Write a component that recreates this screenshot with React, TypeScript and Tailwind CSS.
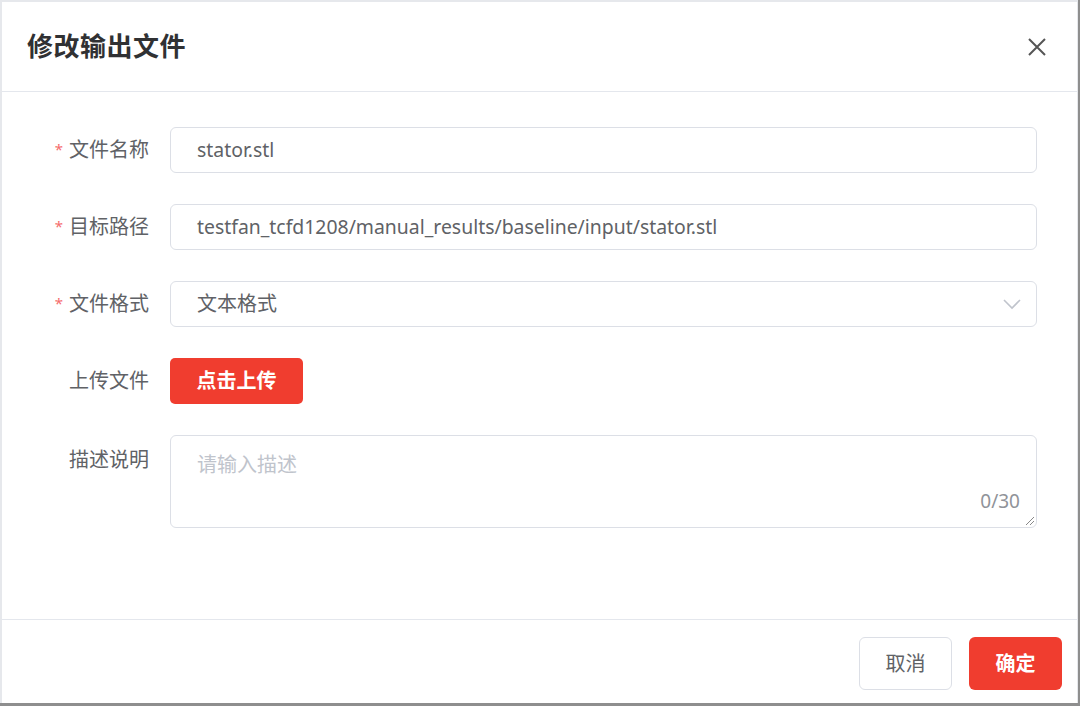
import React from "react"

const cjk = "font-['Noto_Sans','Noto_Sans_CJK_SC',sans-serif]"

function Field({
  label,
  required,
  children,
  top,
}: {
  label: string
  required?: boolean
  children: React.ReactNode
  top?: boolean
}) {
  return (
    <div className={`flex ${top ? "items-start" : "items-center"}`}>
      <div
        className={`w-[168px] shrink-0 pr-[21px] flex justify-end items-center text-[20px] text-[#606266] ${
          top ? "h-[50px]" : "h-[46px]"
        }`}
      >
        {required && <span className="text-[#f56c6c] text-[15px] mr-[6px] mt-[-2px]">*</span>}
        <span>{label}</span>
      </div>
      <div className="flex-1 mr-[40px]">{children}</div>
    </div>
  )
}

function TextInput({ value }: { value: string }) {
  return (
    <div className="h-[46px] rounded-[6px] border border-[#dcdfe6] bg-white flex items-center px-[26px] text-[19.4px] text-[#606266]">
      {value}
    </div>
  )
}

export default function App() {
  return (
    <div className={`w-[1080px] h-[706px] bg-[#8e8e8e] ${cjk}`}>
      <div className="w-[1078px] h-[703px] bg-white border-l-2 border-t-2 border-r border-[#e6e8ec] flex flex-col">
        {/* header */}
        <div className="h-[90px] shrink-0 flex items-center justify-between pl-[25px] pr-[26px] border-b border-[#e4e7ed]">
          <h2 className="text-[26px] font-bold text-[#303133] tracking-[0.5px]">修改输出文件</h2>
          <button className="text-[#555] p-1">
            <svg width="20" height="20" viewBox="0 0 20 20" fill="none" stroke="currentColor" strokeWidth="2">
              <path d="M2 2 L18 18 M18 2 L2 18" />
            </svg>
          </button>
        </div>

        {/* body */}
        <div className="flex-1 pt-[35px] flex flex-col gap-[31px]">
          <Field label="文件名称" required>
            <TextInput value="stator.stl" />
          </Field>
          <Field label="目标路径" required>
            <TextInput value="testfan_tcfd1208/manual_results/baseline/input/stator.stl" />
          </Field>
          <Field label="文件格式" required>
            <div className="h-[46px] rounded-[6px] border border-[#dcdfe6] bg-white flex items-center justify-between pl-[26px] pr-[14px] text-[20px] text-[#606266]">
              <span>文本格式</span>
              <svg width="20" height="12" viewBox="0 0 20 12" fill="none" stroke="#c0c4cc" strokeWidth="1.6">
                <path d="M2 2 L10 10 L18 2" />
              </svg>
            </div>
          </Field>
          <Field label="上传文件">
            <button className="h-[46px] w-[133px] rounded-[5px] bg-[#f03d2f] text-white text-[20px] font-bold">
              点击上传
            </button>
          </Field>
          <Field label="描述说明" top>
            <div className="relative h-[93px] rounded-[6px] border border-[#dcdfe6] bg-white px-[26px] pt-[14px] text-[20px]">
              <span className="text-[#c0c4cc]">请输入描述</span>
              <span className="absolute right-[16px] bottom-[12px] text-[19px] text-[#909399]">0/30</span>
              <svg className="absolute right-[1px] bottom-[1px]" width="12" height="12" viewBox="0 0 12 12" stroke="#888" strokeWidth="1">
                <path d="M11 3 L3 11 M11 7 L7 11" />
              </svg>
            </div>
          </Field>
        </div>

        {/* footer */}
        <div className="h-[84px] shrink-0 border-t border-[#e4e7ed] flex justify-end gap-[17px] pr-[15px] pt-[17px]">
          <button className="h-[53px] w-[93px] rounded-[6px] border border-[#dcdfe6] bg-white text-[20px] text-[#606266]">
            取消
          </button>
          <button className="h-[53px] w-[93px] rounded-[6px] bg-[#f03d2f] text-[20px] font-bold text-white">
            确定
          </button>
        </div>
      </div>
    </div>
  )
}
